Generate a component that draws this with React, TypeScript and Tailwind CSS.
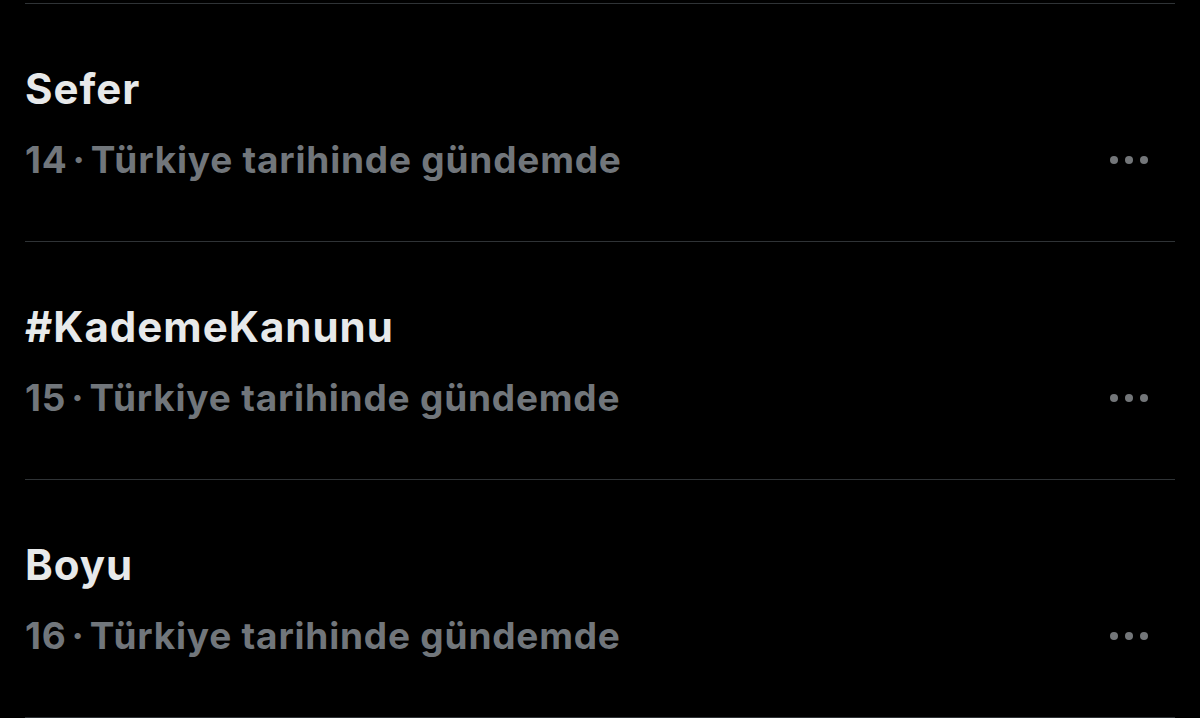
const trends = [
  { rank: 14, title: 'Sefer' },
  { rank: 15, title: '#KademeKanunu' },
  { rank: 16, title: 'Boyu' },
];

function MoreDots() {
  return (
    <div className="flex items-center gap-[7px] mr-[27px]">
      <span className="w-[8px] h-[8px] rounded-full bg-[#737679]" />
      <span className="w-[8px] h-[8px] rounded-full bg-[#737679]" />
      <span className="w-[8px] h-[8px] rounded-full bg-[#737679]" />
    </div>
  );
}

export default function App() {
  return (
    <div
      className="w-[1200px] h-[718px] overflow-hidden bg-black pt-[3px] px-[25px]"
      style={{ fontFamily: 'Inter, "Noto Sans", sans-serif' }}
    >
      {trends.map((t) => (
        <div key={t.rank} className="border-t border-[#2f3336] h-[238px] flex flex-col pt-[61px]">
          <div className="text-[42px] leading-[48px] font-bold text-[#e7e9ea] tracking-[1px]">
            {t.title}
          </div>
          <div className="flex items-center justify-between mt-[25px]">
            <div className="text-[37px] leading-[44px] font-bold text-[#71767b] tracking-[0.8px]">
              {t.rank}<span className="mx-[5px]">·</span>Türkiye tarihinde gündemde
            </div>
            <MoreDots />
          </div>
        </div>
      ))}
      <div className="border-t border-[#2f3336]" />
    </div>
  );
}
